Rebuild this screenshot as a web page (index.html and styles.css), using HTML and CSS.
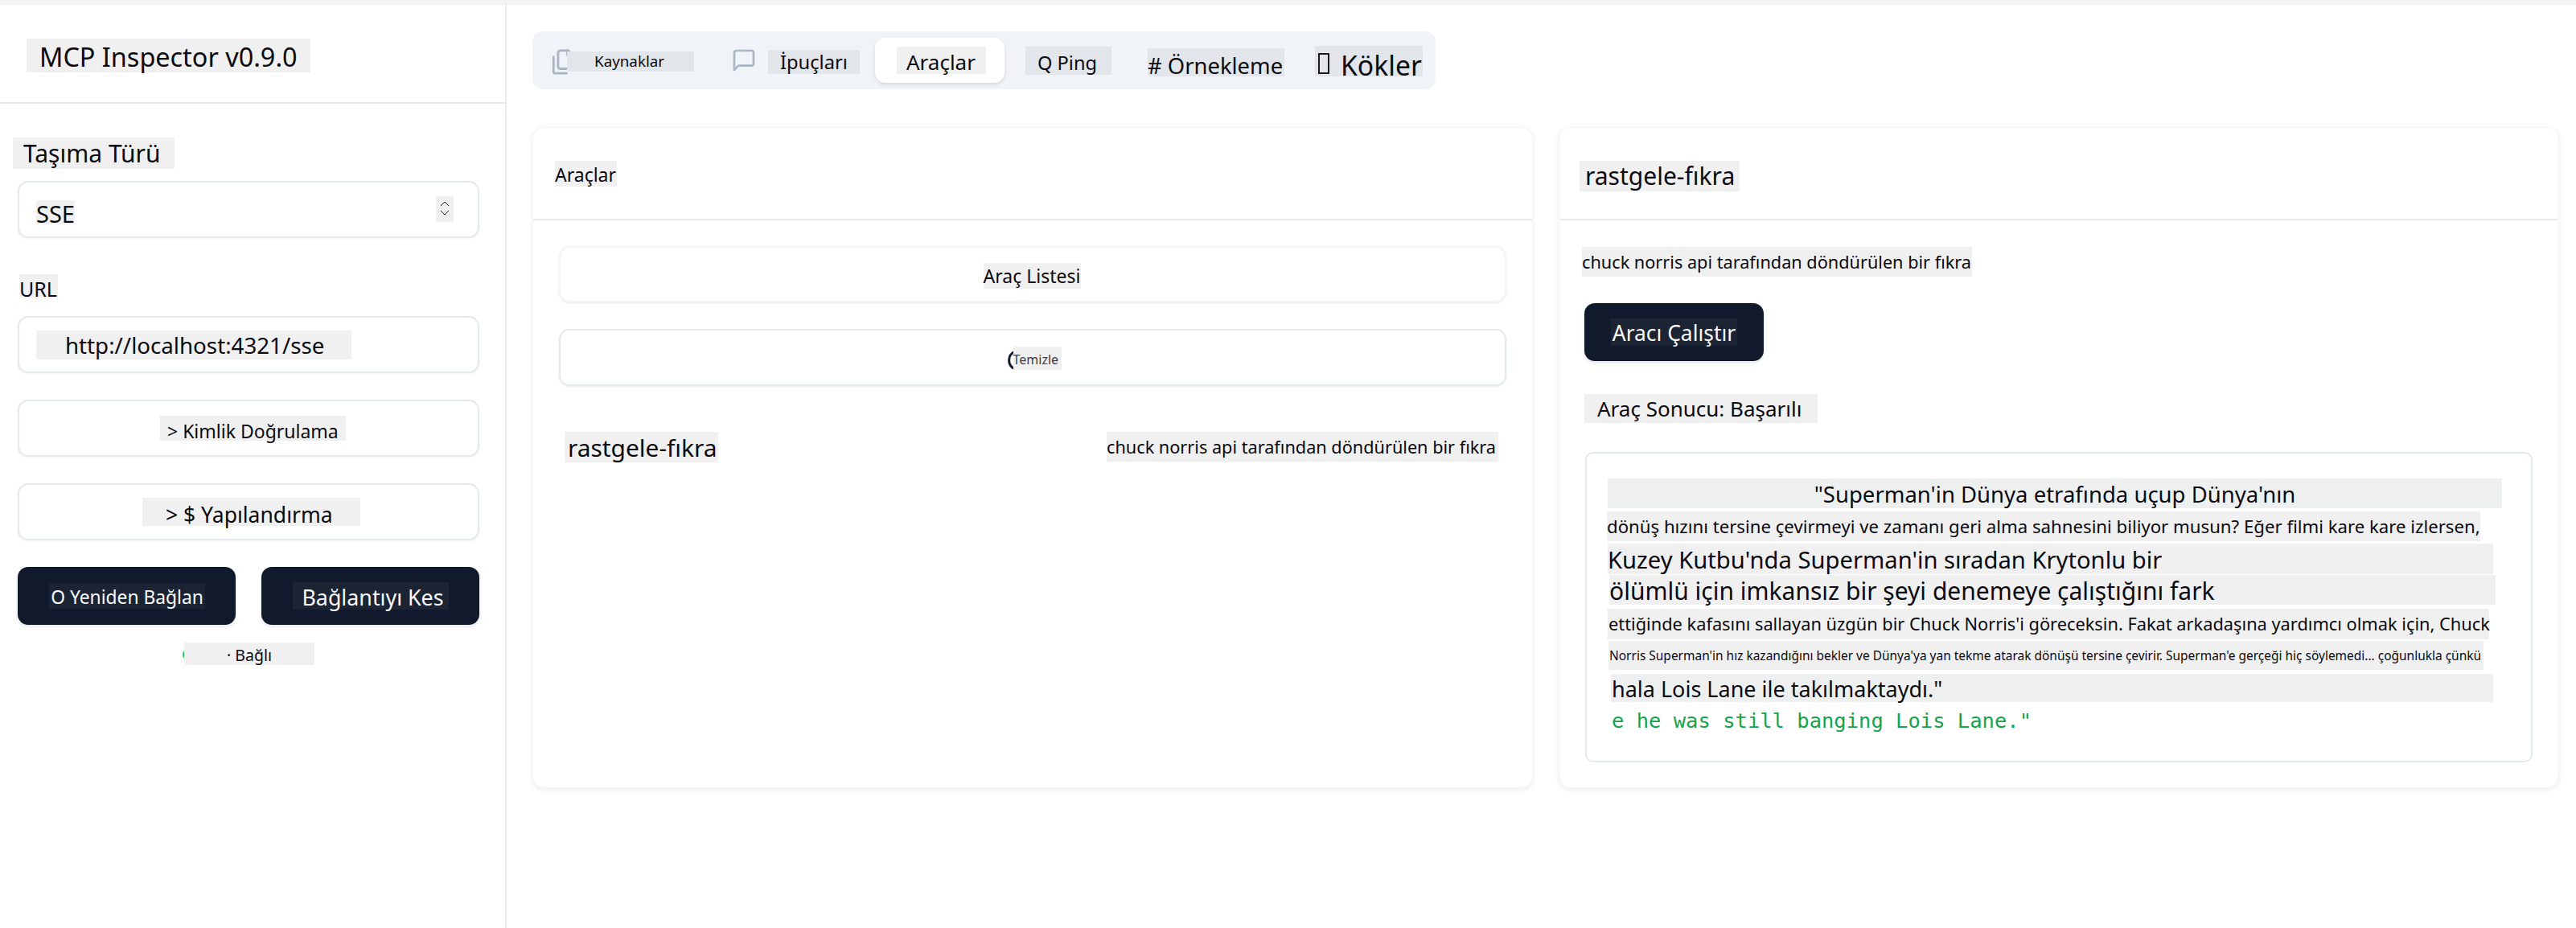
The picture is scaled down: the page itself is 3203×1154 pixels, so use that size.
FILE: index.html
```html
<!DOCTYPE html>
<html lang="tr">
<head>
<meta charset="utf-8">
<title>MCP Inspector</title>
<link rel="stylesheet" href="styles.css">
</head>
<body>
<div class="strip"></div>
<div class="app">
  <aside class="sidebar">
    <header class="side-head"><h1 class="p title">MCP Inspector v0.9.0</h1></header>
    <div class="side-body">
      <div class="p l-type">Taşıma Türü</div>
      <div class="box select">
        <span class="p sse">SSE</span>
        <span class="p chev"><svg viewBox="0 0 24 24" width="24" height="24"><path d="m7 15 5 5 5-5M7 9l5-5 5 5"/></svg></span>
      </div>
      <div class="p l-url">URL</div>
      <div class="box input"><span class="p url">http://localhost:4321/sse</span></div>
      <div class="box mid"><span class="p auth">&gt; Kimlik Doğrulama</span></div>
      <div class="box mid"><span class="p conf">&gt; $ Yapılandırma</span></div>
      <div class="pair">
        <button class="dark" type="button"><span class="pd re">O Yeniden Bağlan</span></button>
        <button class="dark" type="button"><span class="pd dis">Bağlantıyı Kes</span></button>
      </div>
      <div class="status"><i class="dot"></i><span class="p conn">· Bağlı</span></div>
    </div>
  </aside>
  <main class="main">
    <nav class="tabs">
      <svg class="ic ic-files" viewBox="0 0 24 24"><path d="M20 7h-3a2 2 0 0 1-2-2V2"/><path d="M9 18a2 2 0 0 1-2-2V4a2 2 0 0 1 2-2h7l4 4v10a2 2 0 0 1-2 2Z"/><path d="M3 7.6v12.8A1.6 1.6 0 0 0 4.6 22h9.8"/></svg>
      <span class="t t-res">Kaynaklar</span>
      <svg class="ic ic-msg" viewBox="0 0 24 24"><path d="M21 15a2 2 0 0 1-2 2H7l-4 4V5a2 2 0 0 1 2-2h14a2 2 0 0 1 2 2z"/></svg>
      <span class="t t-pr">İpuçları</span>
      <span class="active"><span class="p t-act">Araçlar</span></span>
      <span class="t t-ping">Q Ping</span>
      <span class="t t-samp"># Örnekleme</span>
      <span class="t t-root"><i class="tofu"></i>Kökler</span>
    </nav>
    <div class="cards">
      <section class="card">
        <header class="card-head"><h2 class="p h-tools">Araçlar</h2></header>
        <div class="left-body">
          <div class="wide w-list"><span class="p list">Araç Listesi</span></div>
          <div class="wide w-clear">
            <svg class="spin" viewBox="0 0 24 24"><path d="M11 1.500C2.500 6 2.500 18 11 22.500"/></svg>
            <span class="p clear">Temizle</span>
          </div>
          <div class="row">
            <span class="p name">rastgele-fıkra</span>
            <span class="p desc">chuck norris api tarafından döndürülen bir fıkra</span>
          </div>
        </div>
      </section>
      <section class="card">
        <header class="card-head"><h2 class="p h-tool">rastgele-fıkra</h2></header>
        <div class="right-body">
          <div class="p desc2">chuck norris api tarafından döndürülen bir fıkra</div>
          <button class="dark run" type="button"><span class="pd run-t">Aracı Çalıştır</span></button>
          <div class="p result-h">Araç Sonucu: Başarılı</div>
          <div class="result">
            <div class="ln l1">"Superman'in Dünya etrafında uçup Dünya'nın</div>
            <div class="ln l2">dönüş hızını tersine çevirmeyi ve zamanı geri alma sahnesini biliyor musun? Eğer filmi kare kare izlersen,</div>
            <div class="ln l3">Kuzey Kutbu'nda Superman'in sıradan Krytonlu bir</div>
            <div class="ln l4">ölümlü için imkansız bir şeyi denemeye çalıştığını fark</div>
            <div class="ln l5">ettiğinde kafasını sallayan üzgün bir Chuck Norris'i göreceksin. Fakat arkadaşına yardımcı olmak için, Chuck</div>
            <div class="ln l6">Norris Superman'in hız kazandığını bekler ve Dünya'ya yan tekme atarak dönüşü tersine çevirir. Superman'e gerçeği hiç söylemedi... çoğunlukla çünkü</div>
            <div class="ln l7">hala Lois Lane ile takılmaktaydı."</div>
            <div class="l8">e he was still banging Lois Lane."</div>
          </div>
        </div>
      </section>
    </div>
  </main>
</div>
</body>
</html>
```
FILE: styles.css
```css
* { box-sizing: border-box; }
html, body { margin: 0; padding: 0; }
body { background: #fff; color: #0a0a0f; font-family: "Noto Sans", sans-serif; height: 1154px; overflow: hidden; }
h1, h2 { margin: 0; font-weight: 400; }
.strip { height: 6px; background: #f4f4f5; border-bottom: 1px solid #eeeef0; }
.app { display: flex; height: 1148px; }

.p { display: block; background: #f0f0f0; white-space: nowrap; }

.sidebar { width: 630px; flex: none; border-right: 2px solid #e8ebf1; }
.side-head { height: 123px; border-bottom: 2px solid #e8e9ee; padding: 5px 0 0 33px; display: flex; align-items: center; }
.title { width: 353px; height: 42px; line-height: 44px; font-size: 32.400px; padding-left: 16px; }
.side-body { padding: 42px 32px 0 22px; }
.l-type { width: 201px; height: 39px; line-height: 39px; font-size: 30px; padding-left: 13px; margin-left: -6px; }
.box { width: 574px; height: 71px; border: 2px solid #e3e8f1; border-radius: 13px; box-shadow: 0 1px 3px rgba(15, 23, 42, .06); display: flex; align-items: center; }
.select { margin-top: 15px; padding: 0 30px 0 21px; justify-content: space-between; }
.sse { width: 48px; height: 30px; line-height: 34px; font-size: 29px; margin-top: 6px; }
.chev { width: 22px; height: 32px; margin-top: -2px; }
.chev svg { display: block; margin: 3px 0 0 -1px; }
.chev path { fill: none; stroke: #1a1a22; stroke-width: 1; }
.l-url { width: 48px; height: 29px; line-height: 37px; font-size: 25px; margin: 45px 0 0 2px; }
.input { margin-top: 23px; padding-left: 21px; }
.url { width: 392px; height: 36px; line-height: 36px; font-size: 27.700px; padding-left: 36px; }
.mid { margin-top: 33px; justify-content: center; }
.auth { width: 231px; height: 31px; line-height: 39px; font-size: 23px; padding-left: 9px; margin-left: 11px; }
.conf { width: 271px; height: 35px; line-height: 43px; font-size: 26.500px; padding-left: 29px; margin-left: 7px; }
.pair { display: flex; gap: 32px; margin-top: 33px; }
.dark { border: 0; border-radius: 13px; background: #111a2c; color: #f8fafc; font-family: inherit; display: flex; align-items: center; justify-content: center; padding: 0; height: 72px; box-shadow: 0 2px 4px rgba(15, 23, 42, .12); }
.pair .dark { width: 271px; }
.pd { display: block; background: #1c2434; white-space: nowrap; }
.re { width: 194px; height: 32px; line-height: 35px; font-size: 22.800px; padding-left: 1px; }
.dis { width: 194px; height: 34px; line-height: 37px; font-size: 26.800px; padding-left: 6px; }
.status { margin-top: 22px; display: flex; align-items: flex-start; justify-content: center; }
.dot { width: 14px; height: 14px; border-radius: 50%; background: #22c55e; margin: 8px -12px 0 0; }
.conn { position: relative; width: 162px; height: 28px; line-height: 31px; font-size: 19.500px; padding-left: 53px; }

.main { flex: 1; min-width: 0; padding: 33px 21px 0 32px; }
.tabs { width: 1123px; height: 72px; background: #f0f3f8; border-radius: 13px; padding-left: 22px; display: flex; align-items: center; }
.ic { flex: none; fill: none; stroke: #a9b4c4; stroke-width: 2; stroke-linecap: round; stroke-linejoin: round; }
.ic-files { width: 34px; height: 34px; margin-top: 4px; }
.ic-msg { width: 32px; height: 32px; margin-left: 46px; }
.t { display: block; background: #e2e5ea; white-space: nowrap; position: relative; }
.t-res { width: 158px; height: 25px; line-height: 25px; font-size: 18.800px; padding-left: 34px; margin: 3px 0 0 -13px; }
.t-pr { width: 114px; height: 30px; line-height: 30px; font-size: 23.700px; padding-left: 15px; margin: 4px 0 0 14px; }
.active { width: 161px; height: 56px; margin-left: 19px; background: #fff; border-radius: 13px; box-shadow: 0 2px 4px rgba(15, 23, 42, .12); display: flex; align-items: center; padding-left: 27px; }
.t-act { width: 111px; height: 34px; line-height: 39px; font-size: 26px; padding-left: 12px; background: #f0f0f0; }
.t-ping { width: 107px; height: 35px; line-height: 41px; font-size: 23.600px; padding-left: 15px; margin: 1px 0 0 26px; }
.t-samp { width: 170px; height: 35px; line-height: 43px; font-size: 27.400px; margin: 5px 0 0 45px; }
.t-root { width: 134px; height: 38px; line-height: 49px; font-size: 33.700px; margin: 2px 0 0 38px; padding-left: 32px; }
.tofu { position: absolute; left: 4px; top: 9px; width: 14px; height: 26px; border: 2px solid #1a1a22; }

.cards { display: grid; grid-template-columns: 1fr 1fr; gap: 32px; margin-top: 47px; }
.card { height: 822px; background: #fff; border: 1px solid #f3f4f6; border-radius: 14px; box-shadow: 0 2px 6px rgba(15, 23, 42, .08); }
.card-head { height: 115px; border-bottom: 2px solid #e8e8ee; padding-top: 41px; }
.h-tools { width: 77px; height: 32px; line-height: 35px; font-size: 23px; margin-left: 27px; }
.h-tool { width: 199px; height: 38px; line-height: 38px; font-size: 30px; margin-left: 25px; padding-left: 7px; }
.left-body { padding: 32px 32px 0; }
.wide { height: 70px; border-radius: 13px; display: flex; align-items: center; justify-content: center; }
.w-list { border: 2px solid #f2f4f8; box-shadow: 0 1px 3px rgba(15, 23, 42, .08); }
.list { width: 121px; height: 32px; line-height: 32px; font-size: 23px; margin: 3px 2px 0 0; }
.w-clear { height: 71px; margin-top: 33px; border: 2px solid #e3e8f1; box-shadow: 0 1px 3px rgba(15, 23, 42, .08); padding-left: 1px; }
.spin { width: 24px; height: 24px; flex: none; margin: 6px -14px 0 0; fill: none; stroke: #10182a; stroke-width: 3; }
.clear { position: relative; width: 60px; height: 29px; line-height: 33px; font-size: 16px; color: #3c3c44; margin-top: 2px; }
.row { display: flex; justify-content: space-between; align-items: flex-start; margin-top: 57px; padding: 0 10px 0 7px; }
.name { width: 191px; height: 38px; line-height: 40px; font-size: 29.900px; padding-left: 4px; }
.desc { width: 487px; height: 37px; line-height: 37px; font-size: 21.700px; }
.right-body { padding: 33px 0 0 28px; }
.desc2 { width: 485px; height: 37px; line-height: 37px; font-size: 21.700px; }
.run { width: 223px; margin: 33px 0 0 3px; }
.run-t { width: 157px; height: 34px; line-height: 37px; font-size: 26.400px; }
.result-h { width: 290px; height: 36px; line-height: 36px; font-size: 26px; margin: 41px 0 0 3px; padding-left: 16px; }
.result { width: 1178px; height: 386px; margin: 36px 0 0 4px; border: 2px solid #e3e8f1; border-radius: 10px; padding: 31px 0 0 26px; }
.ln { background: #f0f0f0; white-space: nowrap; }
.l1 { width: 1112px; height: 37px; line-height: 40px; font-size: 27.500px; text-align: center; background: #eef0f0; }
.l2 { width: 1086px; height: 37px; line-height: 37px; font-size: 22.200px; margin: 4px 0 0 -1px; }
.l3 { width: 1101px; height: 38px; line-height: 41px; font-size: 29.200px; margin-top: 3px; }
.l4 { width: 1102px; height: 37px; line-height: 40px; font-size: 30px; margin: 1px 0 0 2px; }
.l5 { width: 1096px; height: 38px; line-height: 38px; font-size: 21.800px; margin-top: 5px; padding-left: 1px; }
.l6 { width: 1088px; height: 36px; line-height: 36px; font-size: 15.470px; margin: 2px 0 0 1px; padding-left: 1px; }
.l7 { width: 1097px; height: 35px; line-height: 38px; font-size: 27px; margin: 5px 0 0 4px; padding-left: 1px; background: #eef0f0; }
.l8 { height: 30px; line-height: 32px; font-family: "DejaVu Sans Mono", monospace; font-size: 25.500px; color: #16a34a; margin: 7px 0 0 5px; white-space: nowrap; }
```
